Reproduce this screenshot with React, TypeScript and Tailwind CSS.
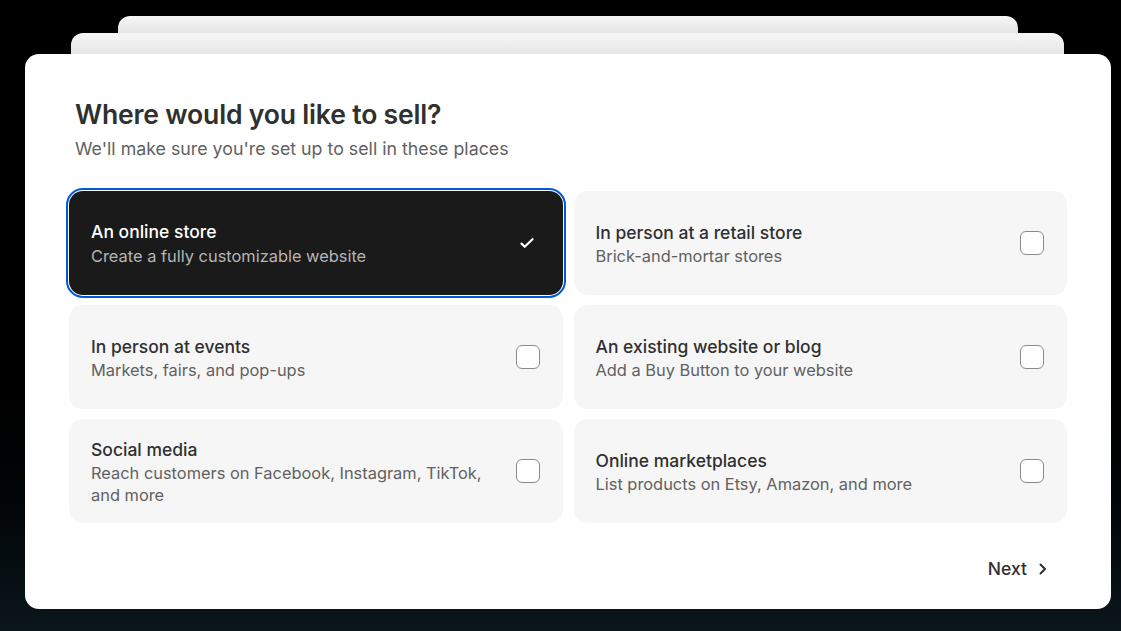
import React from "react";

type Option = { title: string; desc: string; selected?: boolean };

const OPTIONS: Option[] = [
  { title: "An online store", desc: "Create a fully customizable website", selected: true },
  { title: "In person at a retail store", desc: "Brick-and-mortar stores" },
  { title: "In person at events", desc: "Markets, fairs, and pop-ups" },
  { title: "An existing website or blog", desc: "Add a Buy Button to your website" },
  { title: "Social media", desc: "Reach customers on Facebook, Instagram, TikTok, and more" },
  { title: "Online marketplaces", desc: "List products on Etsy, Amazon, and more" },
];

function Check() {
  return (
    <svg width="16" height="16" viewBox="0 0 16 16" fill="none">
      <path d="M2.5 8.6l3.2 3.2L13.5 4.2" stroke="white" strokeWidth="2.2" strokeLinecap="round" strokeLinejoin="round" />
    </svg>
  );
}

function OptionCard({ opt }: { opt: Option }) {
  if (opt.selected) {
    return (
      <div className="h-[104px] rounded-[14px] bg-[#1a1a1a] outline-2 outline-offset-[1px] outline-[#005bd3] flex items-center justify-between pl-[22px] pr-[24px]">
        <div>
          <div className="text-[17.5px] leading-[25px] font-medium text-white">{opt.title}</div>
          <div className="text-[16.4px] leading-[24px] text-[#b5b5b5]">{opt.desc}</div>
        </div>
        <div className="w-6 h-6 flex items-center justify-center">
          <Check />
        </div>
      </div>
    );
  }
  return (
    <div className="h-[104px] rounded-[14px] bg-[#f6f6f6] flex items-center justify-between pl-[22px] pr-[23px]">
      <div className="max-w-[400px]">
        <div className="text-[17.5px] leading-[25px] font-medium text-[#303030]">{opt.title}</div>
        <div className="text-[16.4px] leading-[22px] text-[#616161]">{opt.desc}</div>
      </div>
      <div className="w-6 h-6 shrink-0 rounded-[6px] border border-[#8a8a8a] bg-white" />
    </div>
  );
}

export default function App() {
  return (
    <div
      className="w-[1121px] h-[631px] overflow-hidden bg-gradient-to-b from-black via-black to-[#0b161b] pt-[16px] pl-[25px] pr-[10px]"
      style={{ fontFamily: "Inter, 'Liberation Sans', sans-serif" }}
    >
      {/* stacked cards behind */}
      <div className="mx-[93px] h-[17px] rounded-t-[12px] bg-gradient-to-b from-[#f7f7f7] to-[#e4e4e4]" />
      <div className="ml-[46px] mr-[47px] h-[21px] rounded-t-[12px] bg-gradient-to-b from-[#f7f7f7] to-[#e6e6e6]" />

      {/* main card */}
      <div className="h-[555px] rounded-[14px] bg-white pt-[42px] px-[44px]">
        <h1 className="pl-[6px] text-[26.6px] leading-[36px] font-semibold text-[#303030] tracking-[-0.2px]">
          Where would you like to sell?
        </h1>
        <p className="pl-[6px] mt-[5px] text-[17.8px] leading-[24px] text-[#616161]">
          We'll make sure you're set up to sell in these places
        </p>

        <div className="mt-[30px] grid grid-cols-2 gap-x-[11px] gap-y-[10px]">
          {OPTIONS.map((o) => (
            <OptionCard key={o.title} opt={o} />
          ))}
        </div>

        <div className="mt-[33px] flex justify-end pr-[18px]">
          <button className="flex items-center gap-[10px] text-[17.5px] font-medium text-[#303030]">
            Next
            <svg width="12" height="14" viewBox="0 0 12 14" fill="none">
              <path d="M3.5 2.5l4.5 4.5-4.5 4.5" stroke="#303030" strokeWidth="2" strokeLinecap="round" strokeLinejoin="round" />
            </svg>
          </button>
        </div>
      </div>
    </div>
  );
}
